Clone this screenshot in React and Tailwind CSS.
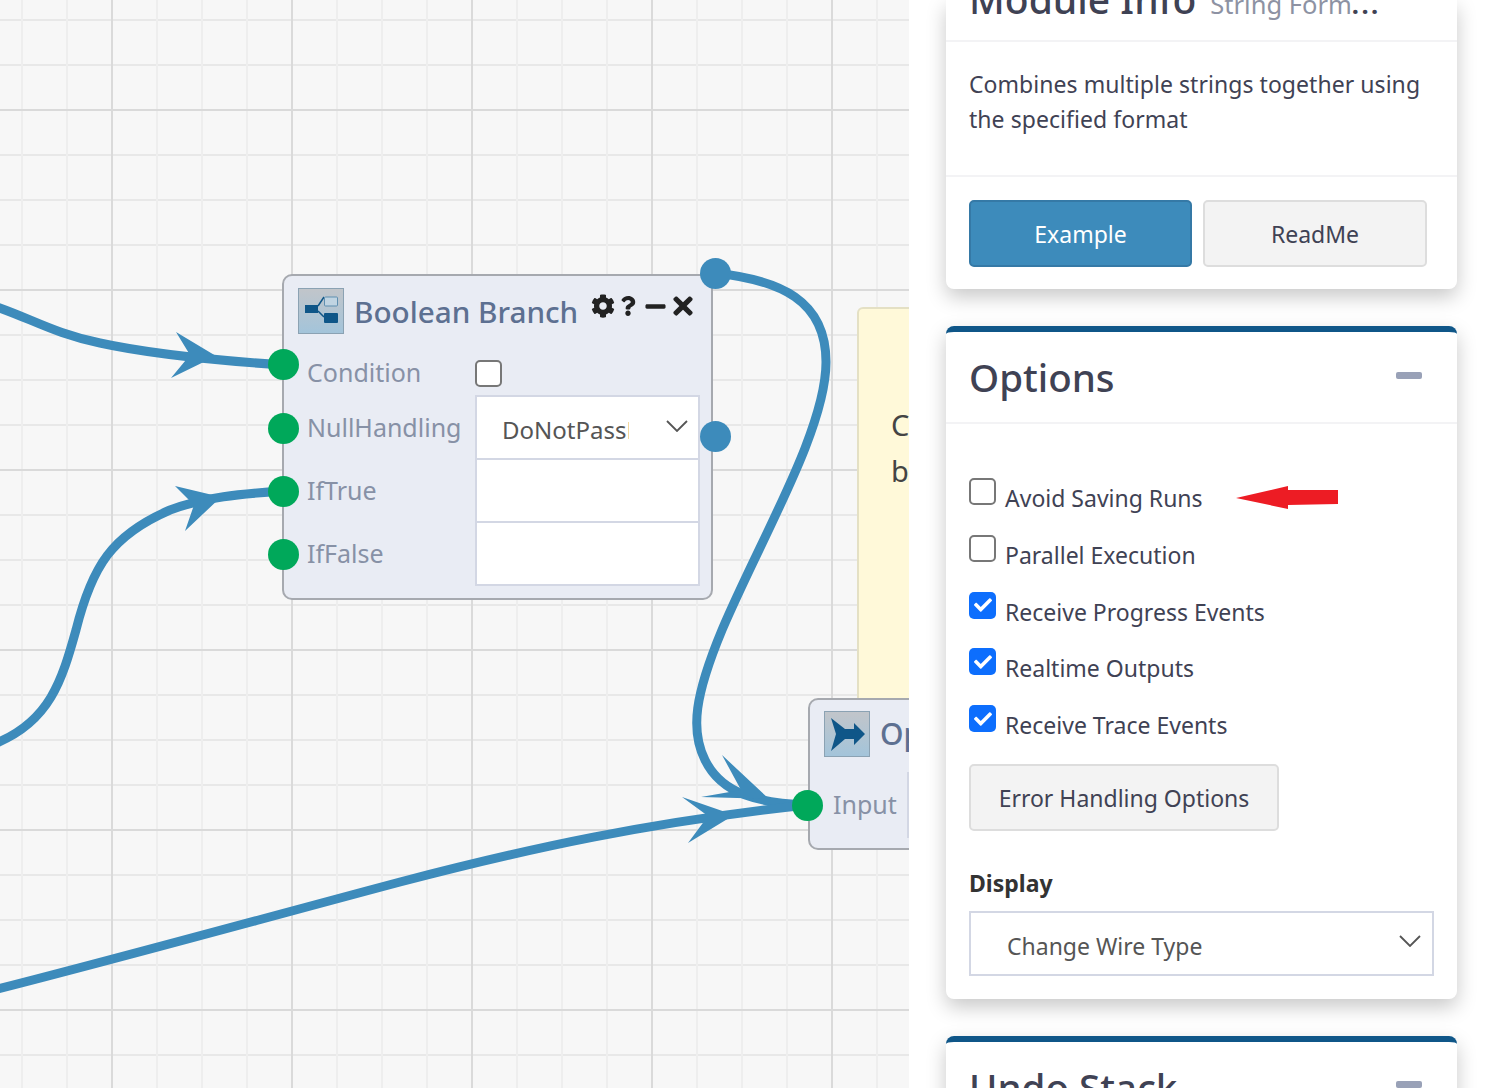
import { FaCog, FaQuestion, FaMinus, FaTimes, FaCheck } from "react-icons/fa";

const WIRES = [
  "M-6 306 C 30 318, 55 334, 100 343 C 150 354, 210 360, 283 365",
  "M-6 744 C 50 722, 62 680, 76 630 C 92 566, 112 535, 170 510 C 205 497, 240 494, 283 491",
  "M715 273 C 780 280, 826 300, 826 362 C 826 430, 760 540, 722 630 C 695 695, 690 730, 705 760 C 722 795, 760 803, 807 805",
  "M-6 990 C 120 958, 250 922, 400 882 C 530 848, 650 822, 807 805",
];

const ARROWS = [
  "176,332 216,356 171,378 190,355",
  "175,486 221,497 185,531 194,505",
  "722,755 769,799 701,797 741,790",
  "682,797 734,815 688,843 708,816",
];

const Port = ({ className }) => (
  <span className={`absolute h-[31px] w-[31px] rounded-full ${className}`} />
);

const Chevron = ({ className }) => (
  <svg viewBox="0 0 22 12" className={`h-[12px] w-[22px] shrink-0 ${className}`} fill="none">
    <path d="M1 1 L11 11 L21 1" stroke="#555" strokeWidth="1.8" />
  </svg>
);

const NodeIcon = ({ children }) => (
  <div className="h-[46px] w-[46px] shrink-0 border border-[#8ba2b3] bg-gradient-to-b from-[#c1c5ca] to-[#a3c4da]">
    <svg viewBox="0 0 44 44" className="h-full w-full">{children}</svg>
  </div>
);

const BranchRow = ({ label, children }) => (
  <div className="flex h-[63px] items-center">
    <span className="w-[168px] pl-[23px] text-[25px] text-[#8791a6]">{label}</span>
    {children}
  </div>
);

const BooleanBranch = () => (
  <div className="absolute left-[282px] top-[274px] h-[326px] w-[431px] rounded-[10px] border-2 border-[#a6a9af] bg-[#e9ecf4]">
    <div className="flex items-center pl-[14px] pt-[12px]">
      <NodeIcon>
        <path d="M19 17 L25 8 M19 22 L25 28" stroke="#0f5688" strokeWidth="1.5" fill="none" />
        <rect x="6" y="16" width="13" height="8" fill="#0f5688" />
        <rect x="25.5" y="8" width="13" height="9" rx="1" fill="#c0d4e2" stroke="#5f8fb0" />
        <rect x="25" y="24" width="14" height="10" rx="1" fill="#0f5688" />
      </NodeIcon>
      <span className="ml-[10px] mt-[1px] w-[237px] text-[29.7px] font-medium leading-none text-[#5d7091]">Boolean Branch</span>
      <div className="-mt-[10px] flex items-center text-[#222]">
        <FaCog className="text-[24px]" />
        <FaQuestion className="ml-[3px] text-[20px]" />
        <FaMinus className="ml-[6px] text-[23px]" />
        <FaTimes className="ml-[2px] text-[28px]" />
      </div>
    </div>
    <div className="mt-[15px] flex flex-col">
      <div className="flex h-[47px] items-center">
        <span className="w-[191px] pl-[23px] text-[25px] text-[#8791a6]">Condition</span>
        <span className="mt-[2px] h-[27px] w-[27px] rounded-[5px] border-2 border-[#777] bg-white" />
      </div>
      <div className="-mt-[1px] ml-[191px] w-[225px] border-2 border-b-0 border-[#d3d7e4] bg-white">
        <div className="flex h-[61px] items-center pl-[25px] pr-[10px] text-[24px] text-[#555]">
          <span className="mt-[5px] w-[127px] overflow-hidden whitespace-nowrap">DoNotPassDown</span>
          <Chevron className="ml-auto -mt-[3px]" />
        </div>
        <div className="h-[63px] border-t-2 border-[#d3d7e4]" />
        <div className="h-[65px] border-y-2 border-[#d3d7e4]" />
      </div>
    </div>
    <div className="absolute left-0 top-[120px] w-full">
      <BranchRow label="NullHandling" />
      <BranchRow label="IfTrue" />
      <BranchRow label="IfFalse" />
    </div>
  </div>
);

const OutputNode = () => (
  <div className="absolute left-[808px] top-[698px] h-[152px] w-[300px] rounded-[10px] border-2 border-[#a6a9af] bg-[#e9ecf4]">
    <div className="flex items-center pl-[14px] pt-[11px]">
      <NodeIcon>
        <path d="M6 6 L20 17 L29 17 L29 11 L40 22 L29 33 L29 27 L20 27 L6 39 L11 22 Z" fill="#0f5688" />
      </NodeIcon>
      <span className="ml-[10px] text-[30px] font-medium leading-none text-[#5d7091]">Options</span>
    </div>
    <div className="mt-[15px] flex h-[66px] items-center">
      <span className="w-[97px] pl-[23px] text-[25px] text-[#8791a6]">Input</span>
      <div className="h-[66px] flex-1 border-2 border-[#d3d7e4] bg-white" />
    </div>
  </div>
);

const Canvas = () => (
  <div className="relative flex-1 overflow-hidden bg-[#f7f7f7] bg-[linear-gradient(to_right,#dadada_2px,transparent_2px),linear-gradient(to_bottom,#dadada_2px,transparent_2px),linear-gradient(to_right,#eeeeee_2px,transparent_2px),linear-gradient(to_bottom,#e8e8e8_2px,transparent_2px)] bg-[length:180px_180px,180px_180px,45px_45px,45px_45px] bg-[position:111px_0,0_109px,21px_0,0_19px]">
    {/* sticky note behind the output node */}
    <div className="absolute left-[857px] top-[307px] h-[420px] w-[300px] rounded-[6px] border-2 border-[#e4e0c4] bg-[#fff9d9] pl-[32px] pt-[93px] text-[29px] leading-[46px] text-[#444]">
      Combines
      <br />
      be
    </div>

    <BooleanBranch />
    <OutputNode />

    <svg className="absolute left-0 top-0 h-[1088px] w-[909px]" viewBox="0 0 909 1088" fill="none">
      {WIRES.map((d) => (
        <path key={d} d={d} stroke="#3d8bbb" strokeWidth="9" />
      ))}
      {ARROWS.map((p) => (
        <polygon key={p} points={p} fill="#3d8bbb" />
      ))}
    </svg>

    <Port className="left-[268px] top-[349px] bg-[#00a85a]" />
    <Port className="left-[268px] top-[413px] bg-[#00a85a]" />
    <Port className="left-[268px] top-[476px] bg-[#00a85a]" />
    <Port className="left-[268px] top-[539px] bg-[#00a85a]" />
    <Port className="left-[700px] top-[258px] bg-[#3d8bbb]" />
    <Port className="left-[700px] top-[421px] bg-[#3d8bbb]" />
    <Port className="left-[792px] top-[790px] bg-[#00a85a]" />
  </div>
);

const Card = ({ title, children }) => (
  <div className="rounded-[8px] border-t-[6px] border-[#0f5688] bg-white shadow-[0_8px_20px_rgba(0,0,0,0.22)]">
    <div className="flex h-[92px] items-center justify-between border-b-2 border-[#f3f3f5] pl-[23px] pr-[35px]">
      <h3 className="text-[38.5px] font-medium leading-none text-[#3f4254]">{title}</h3>
      <span className="-mt-[4px] h-[7px] w-[26px] rounded-[2px] bg-[#99a1b7]" />
    </div>
    {children}
  </div>
);

const OptionRow = ({ label, checked, children }) => (
  <div className="relative flex h-[56.75px] items-start">
    {checked ? (
      <span className="flex h-[27px] w-[27px] items-center justify-center rounded-[5px] bg-[#0d6efd] text-[18px] text-white">
        <FaCheck />
      </span>
    ) : (
      <span className="h-[27px] w-[27px] rounded-[5px] border-2 border-[#777] bg-white" />
    )}
    <span className="ml-[9px] mt-[2px] text-[23px] leading-[36px] text-[#3f4254]">{label}</span>
    {children}
  </div>
);

const Sidebar = () => (
  <div className="flex h-full w-[577px] shrink-0 flex-col overflow-hidden bg-white pl-[37px] pr-[29px]">
    <div className="rounded-b-[8px] bg-white shadow-[0_8px_20px_rgba(0,0,0,0.22)]">
      <div className="flex h-[42px] items-end overflow-hidden border-b-2 border-[#f3f3f5] pl-[23px]">
        <div className="flex items-baseline whitespace-nowrap pb-[10px]">
          <h3 className="text-[39px] font-medium leading-[62px] text-[#3f4254]">Module Info</h3>
          <span className="ml-[14px] text-[25.5px] text-[#8d92a3]">
            String Form<span className="font-bold tracking-[2.5px] text-[#3f4254]">...</span>
          </span>
        </div>
      </div>
      <p className="h-[135px] border-b-2 border-[#f3f3f5] px-[23px] pt-[25px] text-[23px] leading-[35px] tracking-[0.05px] text-[#3f4254]">
        Combines multiple strings together using the specified format
      </p>
      <div className="flex gap-[11px] pb-[22px] pl-[23px] pt-[23px]">
        <button className="h-[67px] w-[223px] rounded-[5px] border-2 border-[#3579a6] bg-[#3d8bbb] pt-[2px] text-[23px] text-white">Example</button>
        <button className="h-[67px] w-[224px] rounded-[5px] border-2 border-[#dddddd] bg-[#f3f3f3] pt-[2px] text-[23px] text-[#3f4254]">ReadMe</button>
      </div>
    </div>

    <div className="mt-[37px]">
      <Card title="Options">
        <div className="px-[23px] pb-[23px] pt-[54px]">
          <OptionRow label="Avoid Saving Runs">
            {/* hand-drawn annotation arrow */}
            <svg viewBox="0 0 102 23" className="absolute left-[267px] top-[8px] h-[23px] w-[102px]">
              <polygon points="0,12 52,0 52,4 102,4 102,18 52,19 52,23" fill="#ed1c24" />
            </svg>
          </OptionRow>
          <OptionRow label="Parallel Execution" />
          <OptionRow label="Receive Progress Events" checked />
          <OptionRow label="Realtime Outputs" checked />
          <OptionRow label="Receive Trace Events" checked />
          <button className="mt-[2px] h-[67px] w-[310px] rounded-[5px] border-2 border-[#dddddd] bg-[#f3f3f3] pt-[1px] text-[23px] text-[#3f4254]">Error Handling Options</button>
          <div className="mt-[32px] text-[23px] font-bold leading-[40px] text-[#333]">Display</div>
          <div className="mt-[8px] flex h-[65px] w-[465px] items-center border-2 border-[#d3d7e4] pl-[36px] pr-[11px] text-[23px] text-[#555]">
            <span className="mt-[5px]">Change Wire Type</span>
            <Chevron className="ml-auto -mt-[5px]" />
          </div>
        </div>
      </Card>
    </div>

    <div className="mt-[37px]">
      <Card title="Undo Stack" />
    </div>
  </div>
);

const App = () => (
  <div className="flex h-[1088px] w-[1486px] overflow-hidden font-['Noto_Sans',sans-serif]">
    <Canvas />
    <Sidebar />
  </div>
);

export default App;
